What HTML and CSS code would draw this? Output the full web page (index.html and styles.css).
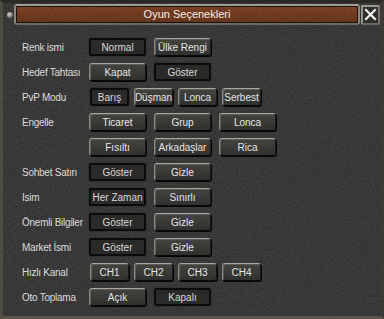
FILE: index.html
```html
<!DOCTYPE html>
<html>
<head>
<meta charset="utf-8">
<link rel="stylesheet" href="styles.css">
</head>
<body>
<div class="window">
  <svg class="noise" width="384" height="319" aria-hidden="true">
    <filter id="grain"><feTurbulence type="fractalNoise" baseFrequency="0.85" numOctaves="3" seed="7"/><feColorMatrix values="1 0 0 0 0  1 0 0 0 0  1 0 0 0 0  0 0 0 0 0.2"/></filter>
    <rect width="384" height="319" fill="#181818"/>
    <rect width="384" height="319" filter="url(#grain)"/>
  </svg>
  <div class="content">
    <div class="header">
      <span class="rivet"></span>
      <div class="titlebar">
        <div class="titlefill">
          <svg class="tnoise" width="340" height="15" aria-hidden="true">
            <filter id="rgrain"><feTurbulence type="fractalNoise" baseFrequency="0.9" numOctaves="2" seed="3"/><feColorMatrix values="1 0 0 0 0  0.5 0 0 0 0  0.2 0 0 0 0  0 0 0 0 0.22"/></filter>
            <rect width="340" height="15" filter="url(#rgrain)"/>
          </svg>
          <span class="title">Oyun Seçenekleri</span>
        </div>
      </div>
      <div class="close"><svg width="13" height="13" viewBox="0 0 13 13"><path d="M2 2 L11 11 M11 2 L2 11" stroke="#f2f2f2" stroke-width="2.2" stroke-linecap="square"/></svg></div>
    </div>
    <div class="rows">
      <div class="row"><span class="label">Renk ismi</span><span class="btn sel">Normal</span><span class="btn">Ülke Rengi</span></div>
      <div class="row"><span class="label">Hedef Tahtası</span><span class="btn">Kapat</span><span class="btn sel">Göster</span></div>
      <div class="row small"><span class="label">PvP Modu</span><span class="btn sel">Barış</span><span class="btn">Düşman</span><span class="btn">Lonca</span><span class="btn">Serbest</span></div>
      <div class="row"><span class="label">Engelle</span><span class="btn">Ticaret</span><span class="btn">Grup</span><span class="btn">Lonca</span></div>
      <div class="row"><span class="label"></span><span class="btn">Fısıltı</span><span class="btn">Arkadaşlar</span><span class="btn">Rica</span></div>
      <div class="row"><span class="label">Sohbet Satırı</span><span class="btn sel">Göster</span><span class="btn">Gizle</span></div>
      <div class="row"><span class="label">Isim</span><span class="btn sel">Her Zaman</span><span class="btn">Sınırlı</span></div>
      <div class="row"><span class="label">Önemli Bilgiler</span><span class="btn sel">Göster</span><span class="btn">Gizle</span></div>
      <div class="row"><span class="label">Market İsmi</span><span class="btn sel">Göster</span><span class="btn">Gizle</span></div>
      <div class="row small"><span class="label">Hızlı Kanal</span><span class="btn">CH1</span><span class="btn">CH2</span><span class="btn">CH3</span><span class="btn">CH4</span></div>
      <div class="row"><span class="label">Oto Toplama</span><span class="btn">Açık</span><span class="btn sel">Kapalı</span></div>
    </div>
  </div>
</div>
</body>
</html>
```
FILE: styles.css
```css
html, body { margin: 0; padding: 0; background: #111; }
body { font-family: "Liberation Sans", Arial, sans-serif; font-size: 10px; color: #e2e2e2; }
.window {
  position: relative;
  width: 384px; height: 319px;
  box-sizing: border-box;
  border: 3px solid #4f4a42;
  border-top-color: #2a2926;
  border-right-color: #3d3933;
  border-bottom-color: #5b554b;
  overflow: hidden;
}
.noise { position: absolute; left: -3px; top: -3px; z-index: 0; }
.content { position: relative; z-index: 1; }
.header { display: flex; align-items: center; height: 21px; margin-top: 1px; padding-left: 4px; }
.rivet {
  width: 6px; height: 6px; border-radius: 50%;
  background: radial-gradient(circle at 35% 35%, #d8d6cf, #7d7a72 60%, #3c3a35);
  margin-right: 1px;
}
.titlebar {
  width: 346px; height: 21px; box-sizing: border-box;
  border: 2px solid #8d887e; border-radius: 3px;
  border-top-color: #a29d92; border-bottom-color: #6e6a62;
  background: #141414; padding: 1px;
}
.titlefill {
  position: relative; overflow: hidden;
  height: 100%; box-sizing: border-box;
  background: linear-gradient(#6a2c14, #5a230f 50%, #4e1d0b);
  color: #f4f0e8; font-size: 11px; text-align: center; line-height: 15px;
}
.tnoise { position: absolute; left: 0; top: 0; }
.title { position: relative; }
.close {
  width: 19px; height: 20px; box-sizing: border-box; margin-left: 1px;
  border: 2px solid #9a968d; border-radius: 2px;
  border-bottom-color: #6c6860; border-right-color: #77736a;
  background: #2e2e2c;
  display: flex; align-items: center; justify-content: center;
}
.rows { display: flex; flex-direction: column; gap: 7px; margin-top: 13px; padding-left: 19px; }
.row { display: flex; align-items: center; gap: 8px; height: 18px; }
.row.small { gap: 5px; }
.label { width: 59px; color: #dcdcdc; white-space: nowrap; letter-spacing: -0.25px; }
.small .label { margin-right: 4px; }
.btn {
  width: 57px; height: 18px; box-sizing: border-box;
  display: flex; align-items: center; justify-content: center;
  border: 1px solid; border-radius: 3px;
  border-color: #a9a69f #1a1a1a #0a0a0a #8c8982;
  background: linear-gradient(#43433f, #30302e);
  box-shadow: inset 1px 1px 0 #5c5b57, 1px 1px 0 #050505;
  color: #e6e6e6; white-space: nowrap;
}
.small .btn { width: 39px; }
.btn.sel {
  border: 2px solid #0b0b0b; border-radius: 2px;
  background: #2a2a29; box-shadow: 0 0 0 1px #333230;
  color: #d8d8d8;
}
```
